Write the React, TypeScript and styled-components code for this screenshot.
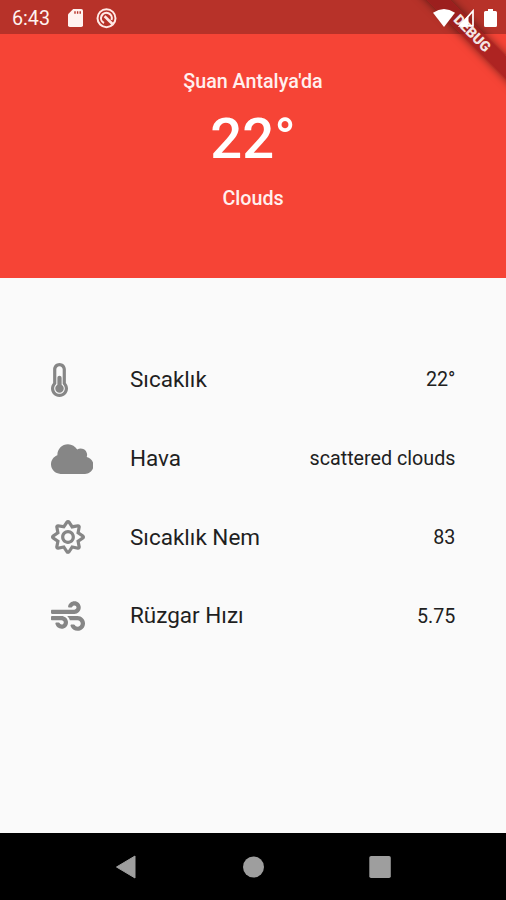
import React from "react";
import styled, { createGlobalStyle } from "styled-components";
import { FaCloud, FaRegSun, FaWind } from "react-icons/fa";

const GlobalStyle = createGlobalStyle`
  * { box-sizing: border-box; }
  body { margin: 0; font-family: Roboto, sans-serif; }
`;

const Screen = styled.div`
  position: relative;
  display: flex;
  flex-direction: column;
  width: 506px;
  height: 900px;
  overflow: hidden;
  background: #fafafa;
`;

const StatusBar = styled.header`
  display: flex;
  align-items: center;
  justify-content: space-between;
  height: 34px;
  flex: none;
  padding: 2px 9px 0 12px;
  background: #b73229;
  color: #fff;
`;

const StatusGroup = styled.div<{ $front?: boolean }>`
  display: flex;
  align-items: center;
  position: relative;
  z-index: ${(p) => (p.$front ? 2 : 0)};
`;

const Clock = styled.span`
  width: 56px;
  padding-top: 2px;
  font-size: 19.7px;
  line-height: 30px;
  color: #fff2f0;
`;

const Glyph = styled.svg<{ $gap?: number }>`
  display: block;
  flex: none;
  margin-left: ${(p) => p.$gap ?? 0}px;
`;

const RibbonClip = styled.div`
  position: absolute;
  inset: 0 0 auto auto;
  width: 110px;
  height: 110px;
  overflow: hidden;
  z-index: 1;
`;

const Ribbon = styled.div`
  position: absolute;
  top: 25.3px;
  right: -46.2px;
  width: 160px;
  height: 17px;
  transform: rotate(45deg);
  background: rgba(146, 24, 26, 0.72);
  box-shadow: 0 0 8px rgba(0, 0, 0, 0.5);
  color: #f4e4e3;
  font-size: 14.3px;
  font-weight: 900;
  line-height: 17px;
  text-align: center;
`;

const Hero = styled.section`
  display: flex;
  flex-direction: column;
  align-items: center;
  flex: none;
  height: 244px;
  padding-top: 35px;
  background: #f64436;
  color: #fff;
`;

const Caption = styled.div`
  font-size: 19.7px;
  font-weight: 500;
  line-height: 26px;
  color: #fff0ee;
`;

const Temperature = styled.div`
  font-size: 56.25px;
  font-weight: 500;
  line-height: 66px;
  margin: 11px 0 13.5px;
`;

const Details = styled.ul`
  flex: 1;
  margin: 0;
  padding: 62.5px 50.6px 0;
  list-style: none;
`;

const Row = styled.li`
  display: flex;
  align-items: center;
  height: 78.75px;
`;

const Leading = styled.span<{ $iconWidth: number }>`
  display: flex;
  width: 79.4px;
  color: #868686;
  svg {
    height: 34px;
    width: ${(p) => p.$iconWidth}px;
  }
`;

const Label = styled.span`
  flex: 1;
  font-size: 22.5px;
  line-height: 30px;
  padding-bottom: 1.5px;
  color: #1f1f1f;
`;

const Value = styled.span`
  font-size: 19.7px;
  line-height: 30px;
  padding-top: 1px;
  color: #202020;
`;

const NavBar = styled.nav`
  display: flex;
  align-items: center;
  justify-content: space-between;
  flex: none;
  height: 67px;
  padding: 0 115px;
  background: #000;
`;

const Thermometer = () => (
  <svg viewBox="0 0 256 512" fill="currentColor">
    <path d="M192 384c0 35.346-28.654 64-64 64s-64-28.654-64-64c0-23.685 12.876-44.349 32-55.417V224c0-17.673 14.327-32 32-32s32 14.327 32 32v104.583c19.124 11.068 32 31.732 32 55.417zm32-84.653c19.912 22.563 32 52.194 32 84.653 0 70.696-57.303 128-128 128-.299 0-.609-.001-.909-.003C56.789 511.509-.357 453.636.002 383.333.166 351.135 12.229 321.755 32 299.347V96c0-53.019 42.981-96 96-96s96 42.981 96 96v203.347zM208 384c0-34.339-19.37-52.19-32-66.502V96c0-26.467-21.533-48-48-48S80 69.533 80 96v221.498c-12.732 14.428-31.825 32.1-31.999 66.08-.224 43.876 35.563 80.116 79.423 80.42L128 464c44.112 0 80-35.888 80-80z" />
  </svg>
);

const readings = [
  { icon: <Thermometer />, width: 17, label: "Sıcaklık", value: "22°" },
  { icon: <FaCloud />, width: 42.5, label: "Hava", value: "scattered clouds" },
  { icon: <FaRegSun />, width: 34, label: "Sıcaklık Nem", value: "83" },
  { icon: <FaWind />, width: 34, label: "Rüzgar Hızı", value: "5.75" },
];

export default function App() {
  return (
    <>
      <GlobalStyle />
      <Screen>
        <StatusBar>
          <StatusGroup>
            <Clock>6:43</Clock>
            <Glyph width="15" height="18" viewBox="0 0 15 18">
              <path d="M5.2 0H13.2Q15 0 15 1.8V16.2Q15 18 13.2 18H1.8Q0 18 0 16.2V5.2Z" fill="#fff2f0" />
              <path d="M7 2.2v2.6M9.600 2.2v2.6M12.200 2.2v2.6" stroke="#b73229" strokeWidth="1.4" />
            </Glyph>
            <Glyph $gap={13} width="21" height="21" viewBox="0 0 21 21" fill="none" stroke="#ffe9e6">
              <circle cx="10.5" cy="10.2" r="9" strokeWidth="2" />
              <path d="M8 15A5.4 5.4 0 1 1 15.500 12" strokeWidth="2.1" />
              <path d="M8.6 8.300L17 16.500" strokeWidth="2.6" />
            </Glyph>
          </StatusGroup>
          <StatusGroup $front>
            <Glyph width="22" height="18" viewBox="0 0 22 18">
              <path d="M0 3.8Q11 -3.6 22 3.8L11 18Z" fill="#fff" />
            </Glyph>
            <Glyph $gap={3} width="17" height="18" viewBox="0 0 17 18">
              <path d="M15 2V16.800H1.8Z" fill="none" stroke="#fff" strokeWidth="1.7" />
              <path d="M1 17.600L10.500 6V17.600Z" fill="#fff" />
            </Glyph>
            <Glyph $gap={9} width="13" height="18" viewBox="0 0 13 18">
              <path d="M4 0h5v2h2.5Q13 2 13 3.5v13Q13 18 11.5 18h-10Q0 18 0 16.500v-13Q0 2 1.500 2H4Z" fill="#fff" />
            </Glyph>
          </StatusGroup>
        </StatusBar>
        <RibbonClip>
          <Ribbon>DEBUG</Ribbon>
        </RibbonClip>
        <Hero>
          <Caption>Şuan Antalya'da</Caption>
          <Temperature>22°</Temperature>
          <Caption>Clouds</Caption>
        </Hero>
        <Details>
          {readings.map((r) => (
            <Row key={r.label}>
              <Leading $iconWidth={r.width}>{r.icon}</Leading>
              <Label>{r.label}</Label>
              <Value>{r.value}</Value>
            </Row>
          ))}
        </Details>
        <NavBar>
          <Glyph width="21" height="24" viewBox="0 0 21 24">
            <path d="M20 1V23L1.500 12Z" fill="#9e9e9e" stroke="#9e9e9e" strokeLinejoin="round" />
          </Glyph>
          <Glyph width="22" height="22" viewBox="0 0 22 22">
            <circle cx="11.500" cy="11" r="10.500" fill="#9e9e9e" />
          </Glyph>
          <Glyph width="22" height="22" viewBox="0 0 22 22">
            <rect x="0.300" width="21.500" height="22" rx="1.800" fill="#9e9e9e" />
          </Glyph>
        </NavBar>
      </Screen>
    </>
  );
}
